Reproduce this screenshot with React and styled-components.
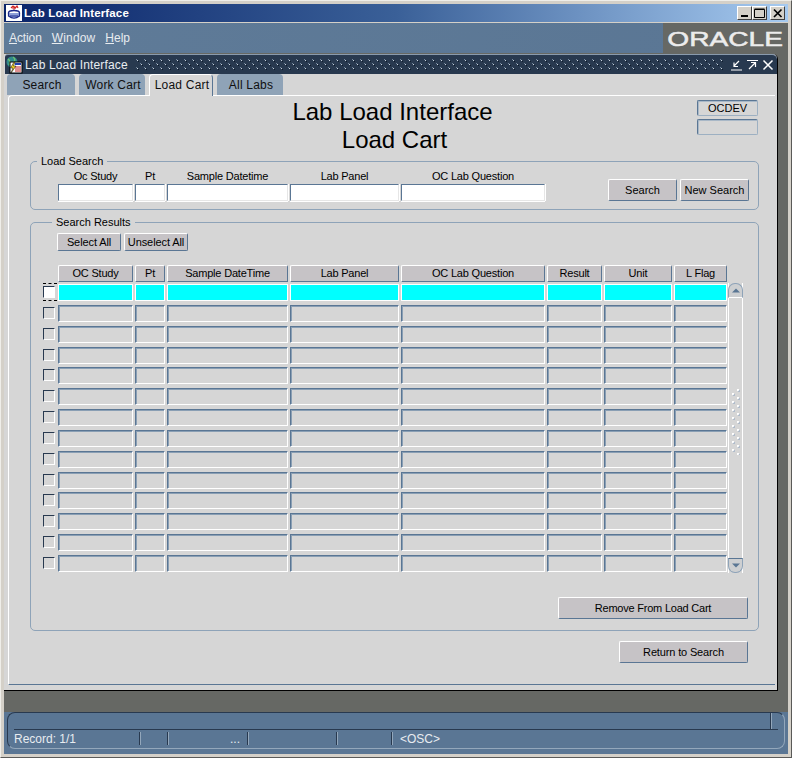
import React from "react";
import styled, { createGlobalStyle } from "styled-components";

const FONT = `"Liberation Sans", Arial, sans-serif`;
const COLUMNS = "75px 30px 121px 109px 144px 55px 68px 53px";
const FACE = "#d6d6d6";
const BLUE = "#5a7694";
const NAVY = "#28394f";
const BTN = "#c6c3c6";

const Global = createGlobalStyle`
  html, body { margin: 0; padding: 0; background: #d4d0c8; }
  * { box-sizing: border-box; }
`;

const Frame = styled.div`
  width: 792px;
  height: 758px;
  padding: 4px 4px 4px 4px;
  background: #d4d0c8;
  border-top: 1px solid #efeee9;
  border-left: 1px solid #efeee9;
  border-right: 1px solid #5a5a58;
  border-bottom: 1px solid #5a5a58;
  display: flex;
  flex-direction: column;
  font: 11px ${FONT};
`;
const OuterInner = styled.div`
  margin: -1px;
  display: flex;
  flex-direction: column;
  height: 752px;
`;
const TitleBar = styled.div`
  height: 18px;
  background: linear-gradient(90deg, #0a246a 0%, #3a6098 50%, #a6caf0 100%);
  display: flex;
  align-items: center;
  padding: 0 3px 0 2px;
  color: #fff;
  font-weight: bold;
  font-size: 11.5px;
  flex: none;
`;
const TitleText = styled.span`
  margin-left: 2px;
  flex: 1;
  letter-spacing: 0.15px;
`;
const WinButtons = styled.div`
  display: flex;
`;
const WinButton = styled.div`
  width: 15px;
  height: 14px;
  margin-left: ${(p) => p.$gap}px;
  background: #d4d0c8;
  border-top: 1px solid #fff;
  border-left: 1px solid #fff;
  border-right: 1px solid #404040;
  border-bottom: 1px solid #404040;
  display: flex;
  align-items: center;
  justify-content: center;
`;
const Seam = styled.div`
  height: 1px;
  background: #d4d0c8;
  flex: none;
`;
const MenuBar = styled.div`
  height: 30px;
  flex: none;
  display: flex;
  align-items: stretch;
  background: linear-gradient(90deg, #5f7b98 0%, #5a7694 100%);
`;
const Menus = styled.div`
  flex: 1;
  display: flex;
  align-items: center;
  gap: 10px;
  padding-left: 5px;
  color: #e8ecf0;
  font-size: 12px;
`;
const MenuItem = styled.span`
  letter-spacing: ${(p) => p.$track || 0}px;
  &::first-letter {
    text-decoration: underline;
  }
`;
const LogoBox = styled.div`
  width: 125px;
  background: #666864;
  display: flex;
  align-items: center;
  justify-content: center;
  overflow: hidden;
`;
const LogoText = styled.span`
  color: #ececec;
  font: normal 21px/1 ${FONT};
  display: inline-block;
  transform: scaleX(1.34);
  -webkit-text-stroke: 0.5px #ececec;
`;
const Desktop = styled.div`
  height: 659px;
  flex: none;
  background: #666864;
  padding: 1px 10px 21px 0;
`;
const Child = styled.div`
  height: 637px;
  display: flex;
  flex-direction: column;
  border-right: 1px solid #000;
  border-bottom: 1px solid #000;
  background: ${FACE};
  border-top-right-radius: 5px;
`;
const ChildTitle = styled.div`
  height: 20px;
  flex: none;
  margin-left: 1px;
  background: ${NAVY};
  color: #e9edf1;
  display: flex;
  align-items: center;
  font-size: 12px;
  border-top: 1px solid #8a9bad;
  border-top-left-radius: 3px;
  border-top-right-radius: 5px;
`;
const ChildName = styled.span`
  margin-left: 2px;
  width: 111px;
  flex: none;
  letter-spacing: 0.15px;
`;
const GripStrip = styled.svg`
  width: 588px;
  height: 12px;
  flex: none;
`;
const ChildControls = styled.div`
  display: flex;
  margin-left: 6px;
  gap: 3px;
  align-items: center;
`;
const Tabs = styled.div`
  height: 21px;
  flex: none;
  display: flex;
  padding-left: 3px;
  gap: 4px;
  background: ${FACE};
  position: relative;
  z-index: 1;
`;
const Tab = styled.div`
  width: ${(p) => p.$w}px;
  height: ${(p) => (p.$active ? 22 : 21)}px;
  background: ${(p) => (p.$active ? FACE : "#8fa3b7")};
  border-top-left-radius: 4px;
  border-top-right-radius: 4px;
  display: flex;
  align-items: center;
  justify-content: center;
  color: #101010;
  font-size: 12px;
  letter-spacing: 0.2px;
  padding-left: 2px;
  padding-bottom: ${(p) => (p.$active ? 1 : 0)}px;
  ${(p) =>
    p.$active
      ? `border-top: 1px solid #fff; border-left: 1px solid #fff; border-right: 1px solid ${BLUE};`
      : ""}
`;
const Panel = styled.div`
  margin: 0 2px 0 4px;
  height: 590px;
  flex: none;
  padding: 4px 16px 0 21px;
  border-top: 1px solid #fff;
  border-left: 1px solid #fff;
  border-bottom: 1px solid ${BLUE};
  border-top-left-radius: 4px;
  background: ${FACE};
  display: flex;
  flex-direction: column;
`;
const Header = styled.div`
  height: 61px;
  flex: none;
  position: relative;
  display: flex;
  justify-content: center;
`;
const Heading = styled.h1`
  margin: -2px 4px 0 0;
  font: normal 24px/28px ${FONT};
  color: #000;
  text-align: center;
`;
const HeadingLine = styled.span`
  display: block;
  padding-left: ${(p) => p.$indent || 0}px;
`;
const EnvStack = styled.div`
  position: absolute;
  right: 1px;
  top: 0;
  display: flex;
  flex-direction: column;
  gap: 3px;
`;
const EnvBox = styled.div`
  width: 61px;
  height: 16px;
  border-top: 1px solid ${BLUE};
  border-left: 1px solid ${BLUE};
  border-right: 1px solid #9db0c2;
  border-bottom: 1px solid #9db0c2;
  border-radius: 2px;
  box-shadow: inset 1px 1px 0 #a9b8c7;
  text-align: center;
  line-height: 15px;
  font-size: 11px;
  color: #000;
`;
const Group = styled.div`
  position: relative;
  border: 1px solid #8ea3b8;
  border-radius: 5px;
  flex: none;
`;
const Legend = styled.span`
  position: absolute;
  top: -7px;
  left: ${(p) => p.$x}px;
  padding: 0 4px;
  background: ${FACE};
  line-height: 13px;
  font-size: 11px;
  color: #000;
`;
const SearchGroup = styled(Group)`
  height: 49px;
  padding: 8px 9px 0 27px;
  display: flex;
`;
const SearchGrid = styled.div`
  display: grid;
  grid-template-columns: 75px 30px 121px 109px 144px;
  grid-template-rows: 14px 17px;
  gap: 0 2px;
`;
const FieldLabel = styled.span`
  text-align: center;
  font-size: 11px;
  line-height: 13px;
  letter-spacing: -0.2px;
  color: #000;
`;
const Input = styled.div`
  height: 17px;
  background: #fff;
  border-top: 1px solid ${BLUE};
  border-left: 1px solid ${BLUE};
  border-right: 1px solid #e6e6e6;
  border-bottom: 1px solid #e6e6e6;
  box-shadow: 0 1px 0 #fff, 1px 0 0 #fff;
`;
const SearchActions = styled.div`
  margin-left: auto;
  margin-top: 9px;
  display: flex;
  gap: 3px;
`;
const Button = styled.div`
  width: ${(p) => p.$w}px;
  height: ${(p) => p.$h || 22}px;
  background: ${BTN};
  border-top: 1px solid #fff;
  border-left: 1px solid #fff;
  border-right: 1px solid ${BLUE};
  border-bottom: 1px solid ${BLUE};
  border-radius: 2px;
  display: flex;
  align-items: center;
  justify-content: center;
  font-size: 11px;
  letter-spacing: ${(p) => p.$track || 0}px;
  color: #000;
  white-space: nowrap;
`;
const ResultsGroup = styled(Group)`
  height: 409px;
  margin-top: 12px;
  padding: 10px 0 0 12px;
`;
const SelectRow = styled.div`
  margin-left: 14px;
  display: flex;
  gap: 3px;
`;
const TableWrap = styled.div`
  margin-top: 14px;
  display: flex;
`;
const TableArea = styled.div`
  width: 684px;
  flex: none;
`;
const HeaderRow = styled.div`
  margin-left: 15px;
  display: grid;
  grid-template-columns: ${COLUMNS};
  gap: 2px;
  height: 17px;
`;
const ColHead = styled.div`
  background: ${BTN};
  border-top: 1px solid #fff;
  border-left: 1px solid #fff;
  border-right: 1px solid ${BLUE};
  border-bottom: 1px solid ${BLUE};
  border-radius: 2px 2px 0 0;
  text-align: center;
  font-size: 11px;
  line-height: 14px;
  letter-spacing: -0.2px;
  color: #000;
`;
const Rows = styled.div`
  margin-top: 2px;
  display: flex;
  flex-direction: column;
  gap: 3.85px;
`;
const Row = styled.div`
  display: flex;
  height: 17px;
`;
const CheckSlot = styled.div`
  width: 15px;
  flex: none;
  padding-top: 2px;
  position: relative;
`;
const Check = styled.div`
  width: 12px;
  height: 12px;
  background: ${(p) => (p.$on ? "#fff" : FACE)};
  border-top: 1px solid ${NAVY};
  border-left: 1px solid ${NAVY};
  border-right: 1px solid #fff;
  border-bottom: 1px solid #fff;
`;
const Focus = styled.div`
  position: absolute;
  left: 0;
  top: -1px;
  width: 14px;
  height: 18px;
  border-top: 1px dashed #000;
  border-bottom: 1px dashed #000;
`;
const Cells = styled.div`
  display: grid;
  grid-template-columns: ${COLUMNS};
  gap: 2px;
  height: 17px;
`;
const Cell = styled.div`
  height: 17px;
  background: ${(p) => (p.$on ? "#00ffff" : FACE)};
  border-top: 1px solid ${(p) => (p.$on ? "#fff" : BLUE)};
  border-left: 1px solid ${(p) => (p.$on ? "#fff" : BLUE)};
  border-right: 1px solid #fff;
  border-bottom: 1px solid #fff;
  box-shadow: ${(p) => (p.$on ? "none" : "inset 1px 1px 0 #8a9fb4")};
`;
const Scrollbar = styled.div`
  width: 15px;
  margin-top: 18px;
  margin-left: 1px;
  height: 290px;
  flex: none;
  display: flex;
  flex-direction: column;
  border-left: 1px solid #fff;
  border-right: 1px solid #fff;
  background: ${FACE};
`;
const ScrollArrow = styled.div`
  height: 15px;
  flex: none;
  margin: 0 -1px;
  background: #cdcfd1;
  display: flex;
  align-items: center;
  justify-content: center;
  border: 1px solid #8ea3b8;
  ${(p) =>
    p.$down
      ? "border-radius: 0 0 7px 7px; border-top-color:#5a7694;"
      : "border-radius: 7px 7px 0 0; border-bottom-color:#fff;"}
`;
const Track = styled.div`
  flex: 1;
  display: flex;
  align-items: center;
  justify-content: center;
  padding-bottom: 12px;
`;
const GripV = styled.svg`
  width: 9px;
  height: 66px;
`;
const RemoveRow = styled.div`
  display: flex;
  justify-content: flex-end;
  padding-right: 10px;
  margin-top: 24px;
`;
const ReturnRow = styled.div`
  display: flex;
  justify-content: flex-end;
  padding-right: 11px;
  margin-top: 10px;
`;
const StatusBar = styled.div`
  height: 42px;
  flex: none;
  background: ${BLUE};
  padding: 0 3px;
`;
const StatusFrame = styled.div`
  height: 37px;
  border-top: 1px solid ${NAVY};
  border-left: 1px solid ${NAVY};
  border-right: 1px solid #93a7bb;
  border-bottom: 1px solid #93a7bb;
  border-radius: 8px;
  padding: 0 6px;
`;
const StatusTop = styled.div`
  height: 17px;
  border-bottom: 1px solid ${NAVY};
  display: flex;
  justify-content: flex-end;
  padding-right: 7px;
`;
const StatusNotch = styled.div`
  width: 1px;
  background: ${NAVY};
  box-shadow: 1px 0 0 #93a7bb;
`;
const StatusCells = styled.div`
  display: flex;
  height: 16px;
  margin-top: 1px;
  color: #e8ecf0;
  font-size: 12px;
  line-height: 14px;
`;
const StatusCell = styled.div`
  width: ${(p) => p.$w}px;
  flex: none;
  height: 13px;
  white-space: nowrap;
  text-align: ${(p) => p.$align || "left"};
  padding: ${(p) => p.$pad || "0"};
  border-right: ${(p) => (p.$last ? "0" : `1px solid ${NAVY}`)};
  box-shadow: ${(p) => (p.$last ? "none" : "1px 0 0 #93a7bb")};
  margin-top: 1px;
`;

function AppIcon() {
  return (
    <svg width="16" height="16" viewBox="0 0 16 16">
      <rect width="16" height="16" fill="#fff" />
      <path d="M5 3 L7 1 L9 3 L11 1 L12 3" fill="none" stroke="#d02020" strokeWidth="1.2" />
      <circle cx="8" cy="3" r="1.2" fill="none" stroke="#d02020" />
      <ellipse cx="8" cy="8" rx="5.5" ry="2.5" fill="none" stroke="#1c2a8a" strokeWidth="1.4" />
      <path d="M2.5 8 V11 Q8 15.5 13.5 11 V8" fill="#8fa0d8" stroke="#1c2a8a" strokeWidth="1.2" />
      <path d="M4 11 H12" stroke="#1c2a8a" />
    </svg>
  );
}
function DocIcon() {
  return (
    <svg width="18" height="18" viewBox="0 0 18 18">
      <circle cx="7" cy="6" r="5.5" fill="#2f8a8a" />
      <path d="M3 3 Q6 5 4 9 M8 1 Q11 3 9 6" stroke="#70c070" strokeWidth="1.4" fill="none" />
      <rect x="5" y="6" width="12" height="11" fill="#fff" stroke="#000" />
      <rect x="10" y="7" width="6" height="2" fill="#2040b0" />
      <path d="M10 11 H16 M10 13 H16 M10 15 H16" stroke="#c02020" />
      <path d="M9 6 L5.5 12 H8 L6 17 L11 10 H8.5 L10 6 Z" fill="#f0d020" stroke="#000" strokeWidth="0.5" />
    </svg>
  );
}
function Dots({ id, w, h }) {
  return (
    <>
      <defs>
        <pattern id={id} width="8" height="8" patternUnits="userSpaceOnUse">
          <rect x="1" y="1" width="1" height="1" fill="#c6d0da" />
          <rect x="0" y="0" width="1" height="1" fill="#70849a" />
          <rect x="2" y="2" width="1" height="1" fill="#0f1c2c" />
          <rect x="5" y="5" width="1" height="1" fill="#c6d0da" />
          <rect x="4" y="4" width="1" height="1" fill="#70849a" />
          <rect x="6" y="6" width="1" height="1" fill="#0f1c2c" />
        </pattern>
      </defs>
      <rect width={w} height={h} fill={`url(#${id})`} />
    </>
  );
}
function GripDots() {
  const dots = [];
  for (let i = 0; i < 9; i++) {
    dots.push([6, i * 8]);
    if (i < 8) dots.push([1, 4 + i * 8]);
  }
  return (
    <GripV viewBox="0 0 9 66">
      {dots.map(([x, y], i) => (
        <g key={i}>
          <rect x={x} y={y} width="2" height="2" fill="#fff" />
          <rect x={x + 1} y={y + 1} width="2" height="2" fill="#b0bccb" />
          <rect x={x + 1} y={y + 1} width="1" height="1" fill="#eef1f4" />
        </g>
      ))}
    </GripV>
  );
}

const SEARCH_FIELDS = ["Oc Study", "Pt", "Sample Datetime", "Lab Panel", "OC Lab Question"];
const COLUMN_NAMES = ["OC Study", "Pt", "Sample DateTime", "Lab Panel", "OC Lab Question", "Result", "Unit", "L Flag"];
const ROWS = Array.from({ length: 14 }, (_, i) => i);

export default function App() {
  return (
    <>
      <Global />
      <Frame>
        <OuterInner>
          <TitleBar>
            <AppIcon />
            <TitleText>Lab Load Interface</TitleText>
            <WinButtons>
              <WinButton $gap={0}>
                <svg width="10" height="10"><rect x="1" y="7" width="7" height="2" fill="#000" /></svg>
              </WinButton>
              <WinButton $gap={0}>
                <svg width="11" height="10"><path d="M0.5 1.5H10.5V9.5H0.5Z M0.5 1H10.5" fill="none" stroke="#000" /></svg>
              </WinButton>
              <WinButton $gap={3}>
                <svg width="10" height="10"><path d="M1 1.5L8.5 9 M8.5 1.5L1 9" stroke="#000" strokeWidth="1.7" /></svg>
              </WinButton>
            </WinButtons>
          </TitleBar>
          <Seam />
          <MenuBar>
            <Menus>
              <MenuItem $track={-0.1}>Action</MenuItem>
              <MenuItem $track={0.15}>Window</MenuItem>
              <MenuItem>Help</MenuItem>
            </Menus>
            <LogoBox><LogoText>ORACLE</LogoText></LogoBox>
          </MenuBar>
          <Desktop>
            <Child>
              <ChildTitle>
                <DocIcon />
                <ChildName>Lab Load Interface</ChildName>
                <GripStrip><Dots id="strip" w={588} h={12} /></GripStrip>
                <ChildControls>
                  <svg width="13" height="12" viewBox="0 0 13 12">
                    <path d="M1 11H12 M9 2L4 7 M4 3.5V7.5H8" stroke="#fff" strokeWidth="1.2" fill="none" />
                  </svg>
                  <svg width="13" height="12" viewBox="0 0 13 12">
                    <path d="M1 1.5H12 M3 10L9 4 M5 3.5H9.5V8" stroke="#fff" strokeWidth="1.2" fill="none" />
                  </svg>
                  <svg width="12" height="12" viewBox="0 0 12 12">
                    <path d="M1.5 1.5L10.5 10.5 M10.5 1.5L1.5 10.5" stroke="#fff" strokeWidth="1.5" />
                  </svg>
                </ChildControls>
              </ChildTitle>
              <Tabs>
                <Tab $w={68}>Search</Tab>
                <Tab $w={66}>Work Cart</Tab>
                <Tab $w={64} $active>Load Cart</Tab>
                <Tab $w={66}>All Labs</Tab>
              </Tabs>
              <Panel>
                <Header>
                  <Heading>
                    <HeadingLine>Lab Load Interface</HeadingLine>
                    <HeadingLine $indent={4}>Load Cart</HeadingLine>
                  </Heading>
                  <EnvStack>
                    <EnvBox>OCDEV</EnvBox>
                    <EnvBox />
                  </EnvStack>
                </Header>
                <SearchGroup>
                  <Legend $x={6}>Load Search</Legend>
                  <SearchGrid>
                    {SEARCH_FIELDS.map((f) => <FieldLabel key={f}>{f}</FieldLabel>)}
                    {SEARCH_FIELDS.map((f) => <Input key={f} />)}
                  </SearchGrid>
                  <SearchActions>
                    <Button $w={69}>Search</Button>
                    <Button $w={69}>New Search</Button>
                  </SearchActions>
                </SearchGroup>
                <ResultsGroup>
                  <Legend $x={21}>Search Results</Legend>
                  <SelectRow>
                    <Button $w={64} $h={18} $track={-0.1}>Select All</Button>
                    <Button $w={64} $h={18} $track={-0.1}>Unselect All</Button>
                  </SelectRow>
                  <TableWrap>
                    <TableArea>
                      <HeaderRow>
                        {COLUMN_NAMES.map((c) => <ColHead key={c}>{c}</ColHead>)}
                      </HeaderRow>
                      <Rows>
                        {ROWS.map((r) => (
                          <Row key={r}>
                            <CheckSlot>
                              <Check $on={r === 0} />
                              {r === 0 && <Focus />}
                            </CheckSlot>
                            <Cells>
                              {COLUMN_NAMES.map((c) => <Cell key={c} $on={r === 0} />)}
                            </Cells>
                          </Row>
                        ))}
                      </Rows>
                    </TableArea>
                    <Scrollbar>
                      <ScrollArrow>
                        <svg width="8" height="5"><path d="M4 0.5L8 4.5H0Z" fill="#5a7694" /></svg>
                      </ScrollArrow>
                      <Track><GripDots /></Track>
                      <ScrollArrow $down>
                        <svg width="8" height="5"><path d="M0 0.5H8L4 4.5Z" fill="#5a7694" /></svg>
                      </ScrollArrow>
                    </Scrollbar>
                  </TableWrap>
                  <RemoveRow>
                    <Button $w={190} $track={-0.22}>Remove From Load Cart</Button>
                  </RemoveRow>
                </ResultsGroup>
                <ReturnRow>
                  <Button $w={129} $track={-0.15}>Return to Search</Button>
                </ReturnRow>
              </Panel>
            </Child>
          </Desktop>
          <StatusBar>
            <StatusFrame>
              <StatusTop><StatusNotch /></StatusTop>
              <StatusCells>
                <StatusCell $w={126}>Record: 1/1</StatusCell>
                <StatusCell $w={28} />
                <StatusCell $w={80} $align="right" $pad="0 7px 0 0">...</StatusCell>
                <StatusCell $w={89} />
                <StatusCell $w={55} />
                <StatusCell $w={100} $last $pad="0 0 0 8px">&lt;OSC&gt;</StatusCell>
              </StatusCells>
            </StatusFrame>
          </StatusBar>
        </OuterInner>
      </Frame>
    </>
  );
}
